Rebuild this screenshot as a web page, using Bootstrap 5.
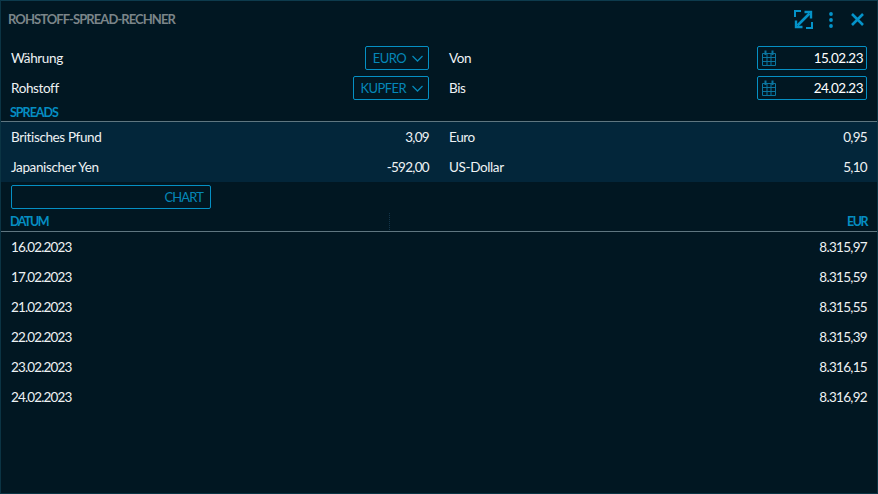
<!DOCTYPE html>
<html lang="de">
<head>
<meta charset="utf-8">
<title>Rohstoff-Spread-Rechner</title>
<link href="https://cdn.jsdelivr.net/npm/bootstrap@5.3.0/dist/css/bootstrap.min.css" rel="stylesheet">
<style>
html,body{height:100%;margin:0;background:#011722}
body{font-family:Lato,"Liberation Sans",sans-serif;font-size:13.5px;letter-spacing:-.38px;color:#eef2f4;line-height:20px}
.panel-box{width:878px;height:494px;background:#011722;border:1px solid #0b3444;border-top-color:#0d3b4d;overflow:hidden}
.title-bar{height:37px;padding:0 13px 0 7px}
.title-text{font-size:13px;font-weight:700;letter-spacing:-.92px;color:#7b8589;padding-bottom:2px}
.hdr-icon{display:block;color:#0493c9}
.icon-dots{margin:0 18px 0 16px}
.form-gap{height:5px}
.form-line{height:30px}
.half-left{width:438px;padding:0 10px 0 10px}
.half-right{width:438px;padding:0 10px 0 10px}
.outline-ctl{height:24px;border:1px solid #0590c4;border-radius:2px;color:#0587b8;padding:0 5px 0 7px;font-size:13px;letter-spacing:-.6px;line-height:22px;background:transparent}
.chev-gap{gap:6px}
.date-ctl{width:110px;padding:0 3px 0 4px}
.date-val{color:#fff;font-size:13.5px;letter-spacing:-.5px}
.sect-head{height:19px;padding:0 9px;font-size:12.5px;font-weight:700;letter-spacing:-1px;color:#058ec2;line-height:19px;border-bottom:1px solid #5f7680}
.spread-band{background:#03263a}
.spread-line{height:30px}
.chart-wrap{padding:3px 10px 0;height:30px}
.chart-btn{width:200px;text-align:right;padding:0 7px;display:block;letter-spacing:-.9px}
.head-line{height:20px;padding:0 10px 0 9px;border-bottom:1px solid #5f7680;font-size:12.5px;font-weight:700;letter-spacing:-1.5px;color:#058ec2;line-height:18px}
.head-first{width:379px}
.col-sep{width:1px;height:17px;background-image:linear-gradient(#12354a 50%,transparent 50%);background-size:1px 2px}
.date-line{height:30px;padding:0 10px}
.amount-val{letter-spacing:-.7px}
.day-val{letter-spacing:-.85px}
</style>
</head>
<body>
<div class="panel-box d-flex flex-column">
  <div class="title-bar d-flex align-items-center justify-content-between">
    <span class="title-text">ROHSTOFF-SPREAD-RECHNER</span>
    <div class="d-flex align-items-center">
      <svg class="hdr-icon" width="19" height="19" viewBox="0 0 19 19" fill="none" stroke="currentColor" stroke-width="2"><path d="M1 7V1H7M18 12V18H12"/><path d="M3.5 15.5L15.5 3.5" stroke-width="2.6"/><path d="M10.5 2H17V8.5M2 10.5V17H8.5" stroke-width="2.4"/></svg>
      <svg class="hdr-icon icon-dots" width="4" height="16" viewBox="0 0 4 16" fill="currentColor"><circle cx="2" cy="2" r="1.9"/><circle cx="2" cy="8" r="1.9"/><circle cx="2" cy="14" r="1.9"/></svg>
      <svg class="hdr-icon" width="13" height="13" viewBox="0 0 13 13" fill="none" stroke="currentColor" stroke-width="2.6"><path d="M1 1L12 12M12 1L1 12"/></svg>
    </div>
  </div>

  <div class="form-gap"></div>
  <div class="d-flex form-line align-items-center">
    <div class="half-left d-flex justify-content-between align-items-center">
      <span>Währung</span>
      <button class="outline-ctl d-flex align-items-center chev-gap" type="button">EURO
        <svg width="11" height="7" viewBox="0 0 11 7" fill="none" stroke="#0587b8" stroke-width="1.3"><path d="M.5 1L5.5 6L10.5 1"/></svg></button>
    </div>
    <div class="half-right d-flex justify-content-between align-items-center">
      <span>Von</span>
      <div class="outline-ctl date-ctl d-flex justify-content-between align-items-center">
        <svg width="14" height="16" viewBox="0 0 14 16" fill="none" stroke="#0a76a0" stroke-width="1"><path d="M.5 3.5H13.5V15.5H.5ZM.5 7.5H13.5M.5 11.5H13.5M5 3.5V15.5M9 3.5V15.5"/><path d="M3.5 .5V5M10.5 .5V5" stroke-width="2"/></svg>
        <span class="date-val">15.02.23</span>
      </div>
    </div>
  </div>
  <div class="d-flex form-line align-items-center">
    <div class="half-left d-flex justify-content-between align-items-center">
      <span>Rohstoff</span>
      <button class="outline-ctl d-flex align-items-center chev-gap" type="button">KUPFER
        <svg width="11" height="7" viewBox="0 0 11 7" fill="none" stroke="#0587b8" stroke-width="1.3"><path d="M.5 1L5.5 6L10.5 1"/></svg></button>
    </div>
    <div class="half-right d-flex justify-content-between align-items-center">
      <span>Bis</span>
      <div class="outline-ctl date-ctl d-flex justify-content-between align-items-center">
        <svg width="14" height="16" viewBox="0 0 14 16" fill="none" stroke="#0a76a0" stroke-width="1"><path d="M.5 3.5H13.5V15.5H.5ZM.5 7.5H13.5M.5 11.5H13.5M5 3.5V15.5M9 3.5V15.5"/><path d="M3.5 .5V5M10.5 .5V5" stroke-width="2"/></svg>
        <span class="date-val">24.02.23</span>
      </div>
    </div>
  </div>
  <div class="sect-head">SPREADS</div>
  <div class="spread-band">
    <div class="d-flex spread-line align-items-center">
      <div class="half-left d-flex justify-content-between"><span>Britisches Pfund</span><span class="amount-val">3,09</span></div>
      <div class="half-right d-flex justify-content-between"><span>Euro</span><span class="amount-val">0,95</span></div>
    </div>
    <div class="d-flex spread-line align-items-center">
      <div class="half-left d-flex justify-content-between"><span>Japanischer Yen</span><span class="amount-val">-592,00</span></div>
      <div class="half-right d-flex justify-content-between"><span>US-Dollar</span><span class="amount-val">5,10</span></div>
    </div>
  </div>
  <div class="chart-wrap"><button class="outline-ctl chart-btn" type="button">CHART</button></div>
  <div class="head-line d-flex align-items-center">
    <span class="head-first">DATUM</span><span class="col-sep"></span><span class="ms-auto">EUR</span>
  </div>
  <div class="date-line d-flex justify-content-between align-items-center"><span class="day-val">16.02.2023</span><span class="amount-val">8.315,97</span></div>
  <div class="date-line d-flex justify-content-between align-items-center"><span class="day-val">17.02.2023</span><span class="amount-val">8.315,59</span></div>
  <div class="date-line d-flex justify-content-between align-items-center"><span class="day-val">21.02.2023</span><span class="amount-val">8.315,55</span></div>
  <div class="date-line d-flex justify-content-between align-items-center"><span class="day-val">22.02.2023</span><span class="amount-val">8.315,39</span></div>
  <div class="date-line d-flex justify-content-between align-items-center"><span class="day-val">23.02.2023</span><span class="amount-val">8.316,15</span></div>
  <div class="date-line d-flex justify-content-between align-items-center"><span class="day-val">24.02.2023</span><span class="amount-val">8.316,92</span></div>
</div>
<script src="https://cdn.jsdelivr.net/npm/bootstrap@5.3.0/dist/js/bootstrap.bundle.min.js"></script>
</body>
</html>
